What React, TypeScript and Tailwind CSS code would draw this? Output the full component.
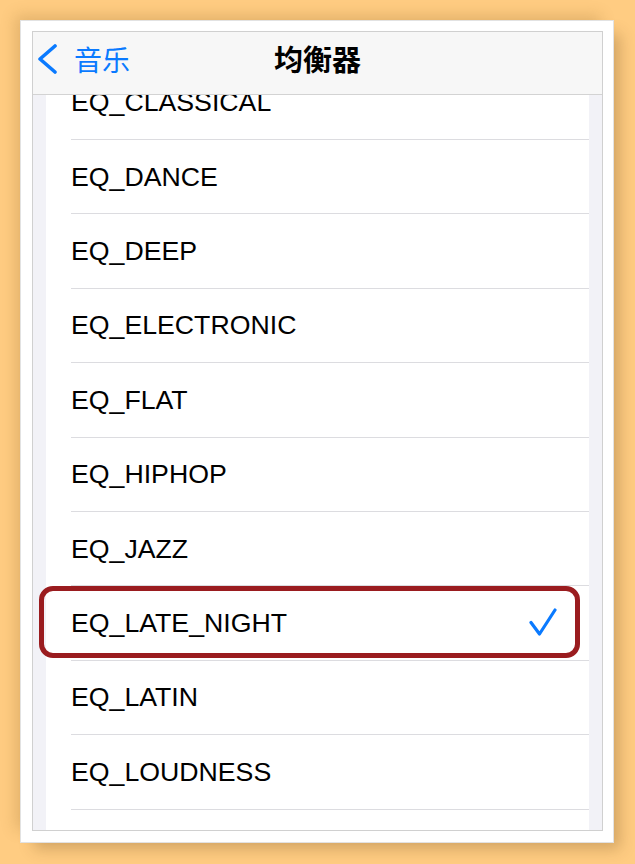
import React from 'react';

const presets = [
  'EQ_CLASSICAL',
  'EQ_DANCE',
  'EQ_DEEP',
  'EQ_ELECTRONIC',
  'EQ_FLAT',
  'EQ_HIPHOP',
  'EQ_JAZZ',
  'EQ_LATE_NIGHT',
  'EQ_LATIN',
  'EQ_LOUDNESS',
];

const selected = 'EQ_LATE_NIGHT';

const ChevronLeft = () => (
  <svg width="22" height="30" viewBox="0 0 22 30" fill="none">
    <path d="M19 2 L4 15 L19 28" stroke="#0a7aff" strokeWidth="3.6" strokeLinecap="round" strokeLinejoin="round" />
  </svg>
);

const Check = () => (
  <svg width="28" height="30" viewBox="0 0 28 30" fill="none">
    <path d="M2 14.5 L10.5 26 L26 2" stroke="#0a7aff" strokeWidth="3.2" strokeLinecap="round" strokeLinejoin="round" />
  </svg>
);

export default function App() {
  return (
    <div
      className="w-[635px] h-[864px] bg-[#ffcc82] pt-[20px] pl-[20px]"
      style={{ fontFamily: '"Liberation Sans", Arial, "Noto Sans CJK SC", sans-serif' }}
    >
      {/* photo card */}
      <div className="w-[594px] h-[823px] bg-white border border-[#e2e2e2] pt-[10px] pl-[11px] shadow-[-9px_-9px_14px_-4px_rgba(120,80,20,0.2),10px_10px_14px_-4px_rgba(80,50,10,0.25)]">
        {/* phone screen */}
        <div className="w-[571px] h-[800px] border border-[#d0d0d0] flex flex-col overflow-hidden bg-[#f2f2f7]">
          <div className="relative h-[63px] shrink-0 bg-[#f7f7f7] border-b border-[#d3d3d3] flex items-center justify-center z-10">
            <div className="absolute left-[3px] top-0 h-full flex items-center -mt-[4px]">
              <ChevronLeft />
              <span
                className="ml-[16px] text-[28px] text-[#0a7aff] leading-none"
                style={{ fontFamily: '"Noto Sans CJK SC", sans-serif' }}
              >
                音乐
              </span>
            </div>
            <span
              className="text-[29px] font-bold text-black leading-none -mt-[10px]"
              style={{ fontFamily: '"Noto Sans CJK SC", sans-serif' }}
            >
              均衡器
            </span>
          </div>

          <div className="flex-1 overflow-hidden px-[13px]">
            <div className="-mt-[29.4px] bg-white">
              {presets.map((name) => (
                <div key={name} className="relative h-[74.4px] pl-[25px]">
                  <div className="h-full flex items-center justify-between pr-[32px] border-b border-[#dcdce0]">
                    <span className="text-[26.7px] text-black">{name}</span>
                    {name === selected && <Check />}
                  </div>
                  {name === selected && (
                    <div className="absolute left-[-7px] right-[9px] top-0 bottom-[3px] border-[5.5px] border-[#9a1c1f] rounded-[14px]" />
                  )}
                </div>
              ))}
              <div className="h-[74.4px]" />
            </div>
          </div>
        </div>
      </div>
    </div>
  );
}
